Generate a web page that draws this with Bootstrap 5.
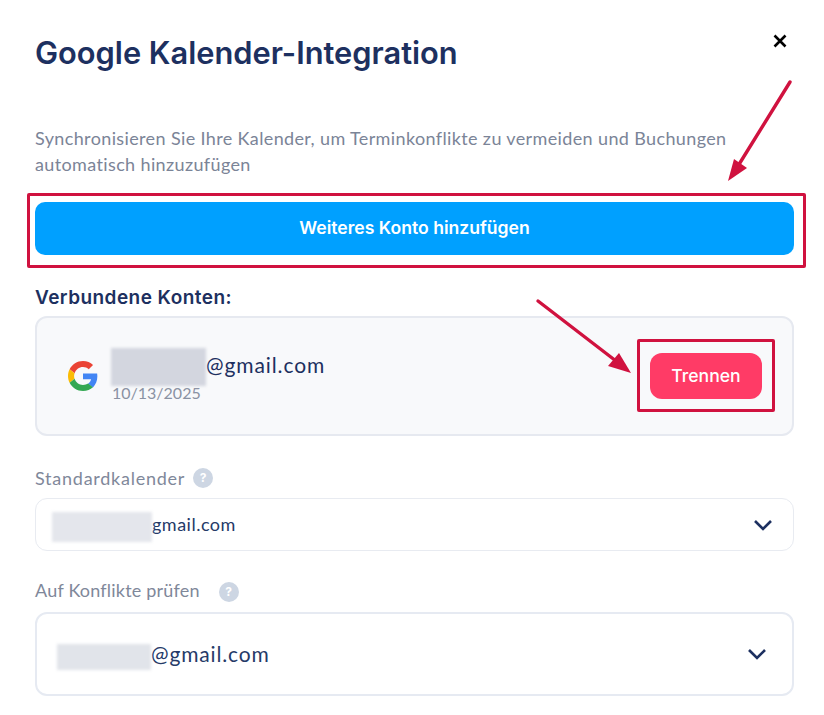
<!DOCTYPE html>
<html lang="de">
<head>
    <meta charset="UTF-8">
    <title>Google Kalender-Integration</title>
    <link href="https://cdn.jsdelivr.net/npm/bootstrap@5.3.0/dist/css/bootstrap.min.css" rel="stylesheet">
    <style>
        body { background: #fff; font-family: "Lato", "Liberation Sans", sans-serif; color: #1d2f5f; overflow: hidden; }
        .dlg { position: relative; width: 824px; height: 715px; padding: 30px 30px 0 35px; }
        .dlg-title { font-family: "Inter", sans-serif; font-weight: 600; font-size: 30.8px; line-height: 46px; color: #1d3060; margin: 0; }
        .dlg-close { border: 0; background: none; padding: 0; width: 16px; height: 16px; margin-top: 4px; margin-right: 5px; display: flex; }
        .dlg-desc { font-size: 18px; line-height: 26px; color: #7b8497; margin: 49px 0 0; width: 759px; letter-spacing: .37px; }
        .btn-addacct { display: block; width: 759px; height: 53px; margin-top: 25px; background: #00a0ff; border: 0; border-radius: 10px; color: #fff; font-family: "Inter", sans-serif; font-weight: 600; font-size: 17.6px; }
        .btn-addacct:hover { background: #00a0ff; color: #fff; }
        .sect-head { font-family: "Inter", sans-serif; font-weight: 600; font-size: 19px; line-height: 24px; letter-spacing: .45px; color: #1d3060; margin: 31px 0 6px; }
        .acct-box { width: 759px; height: 120px; background: #f8f9fb; border: 2px solid #e6e9f0; border-radius: 12px; padding: 0 30px 0 31px; }
        .acct-info { padding-top: 4px; }
        .acct-mail { font-size: 21px; line-height: 24px; color: #1d3060; letter-spacing: .9px; white-space: nowrap; }
        .acct-date { font-size: 16px; line-height: 20px; color: #8a92a3; margin-left: 1px; margin-top: 4px; }
        .acct-row { gap: 13px; }
        .smudge { display: inline-block; background: #d8dbe3; filter: blur(1.5px); vertical-align: middle; }
        .smudge-acct { width: 95px; height: 38px; margin: -7px 0; background: #d3d6df; }
        .smudge-std { width: 100px; height: 30px; background: #e4e6ec; }
        .smudge-chk { width: 94px; height: 26px; background: #e1e4ea; }
        .btn-cut { width: 112px; height: 46px; background: #ff3b66; border: 0; border-radius: 12px; color: #fff; font-family: "Inter", sans-serif; font-weight: 500; font-size: 17.6px; }
        .btn-cut:hover { background: #ff3b66; color: #fff; }
        .fld-label { font-size: 18px; line-height: 24px; color: #7f889a; }
        .fld-std { margin-top: 30px; letter-spacing: .75px; }
        .fld-chk { margin-top: 27px; letter-spacing: .2px; }
        .hint-dot { width: 20px; height: 20px; border-radius: 50%; background: #cdd6e3; color: #fff; font-size: 12px; font-weight: 700; font-family: "Inter", sans-serif; letter-spacing: 0; }
        .fld-chk .hint-dot { margin-left: 3px; margin-top: 3px; }
        .pick-std { width: 759px; height: 53px; border: 1px solid #e8ebf1; border-radius: 12px; margin-top: 8px; padding: 0 20px 0 16px; font-size: 18px; letter-spacing: .5px; color: #253a68; }
        .pick-std > div { padding-top: 4px; }
        .pick-chk { width: 759px; height: 84px; border: 2px solid #e6eaf2; border-radius: 12px; margin-top: 10px; padding: 0 25px 0 20px; font-size: 21px; letter-spacing: .85px; color: #253a68; }
        .mark-box { position: absolute; border: 3px solid #d0123f; border-radius: 2px; pointer-events: none; }
        .mark-add { left: 27px; top: 193px; width: 779px; height: 75px; }
        .mark-cut { left: 637px; top: 339px; width: 138px; height: 73px; }
        .mark-arrows { position: absolute; left: 0; top: 0; pointer-events: none; }
    </style>
</head>
<body>
<div class="dlg">
    <div class="d-flex justify-content-between align-items-start">
        <h1 class="dlg-title">Google Kalender-Integration</h1>
        <button type="button" class="dlg-close" aria-label="Schließen">
            <svg width="14" height="14" viewBox="0 0 14 14"><path d="M1.5 1.5 12.5 12.5M12.5 1.5 1.5 12.5" stroke="#000" stroke-width="2.6" fill="none"/></svg>
        </button>
    </div>

    <p class="dlg-desc">Synchronisieren Sie Ihre Kalender, um Terminkonflikte zu vermeiden und Buchungen automatisch hinzuzufügen</p>

    <button type="button" class="btn btn-addacct">Weiteres Konto hinzufügen</button>

    <div class="sect-head">Verbundene Konten:</div>
    <div class="acct-box d-flex align-items-center justify-content-between">
        <div class="acct-row d-flex align-items-center">
            <svg width="30" height="30" viewBox="0 0 48 48">
                <path fill="#EA4335" d="M24 9.5c3.54 0 6.71 1.22 9.21 3.6l6.85-6.85C35.9 2.38 30.47 0 24 0 14.62 0 6.51 5.38 2.56 13.22l7.98 6.19C12.43 13.72 17.74 9.5 24 9.5z"/>
                <path fill="#4285F4" d="M46.98 24.55c0-1.57-.15-3.09-.38-4.55H24v9.02h12.94c-.58 2.96-2.26 5.48-4.78 7.18l7.73 6c4.51-4.18 7.09-10.36 7.09-17.65z"/>
                <path fill="#FBBC05" d="M10.53 28.59c-.48-1.45-.76-2.99-.76-4.59s.27-3.14.76-4.59l-7.98-6.19C.92 16.46 0 20.12 0 24c0 3.88.92 7.54 2.56 10.78l7.97-6.19z"/>
                <path fill="#34A853" d="M24 48c6.48 0 11.93-2.13 15.89-5.81l-7.73-6c-2.15 1.45-4.92 2.3-8.16 2.3-6.26 0-11.57-4.22-13.47-9.91l-7.98 6.19C6.51 42.62 14.62 48 24 48z"/>
            </svg>
            <div class="acct-info d-flex flex-column">
                <div class="acct-mail"><span class="smudge smudge-acct"></span>@gmail.com</div>
                <div class="acct-date">10/13/2025</div>
            </div>
        </div>
        <button type="button" class="btn btn-cut">Trennen</button>
    </div>

    <div class="fld-label fld-std d-flex align-items-center gap-2">Standardkalender <span class="hint-dot d-flex align-items-center justify-content-center">?</span></div>
    <div class="pick-std d-flex align-items-center justify-content-between">
        <div><span class="smudge smudge-std"></span>gmail.com</div>
        <svg width="20" height="12" viewBox="0 0 20 12"><path d="M2 2 10 10 18 2" stroke="#1d3060" stroke-width="2.6" fill="none"/></svg>
    </div>

    <div class="fld-label fld-chk d-flex align-items-center gap-3">Auf Konflikte prüfen <span class="hint-dot d-flex align-items-center justify-content-center">?</span></div>
    <div class="pick-chk d-flex align-items-center justify-content-between">
        <div><span class="smudge smudge-chk"></span>@gmail.com</div>
        <svg width="20" height="12" viewBox="0 0 20 12"><path d="M2 2 10 10 18 2" stroke="#1d3060" stroke-width="2.6" fill="none"/></svg>
    </div>

    <div class="mark-box mark-add"></div>
    <div class="mark-box mark-cut"></div>
    <svg class="mark-arrows" width="824" height="715" viewBox="0 0 824 715">
        <path d="M790 82 738 166" stroke="#d0123f" stroke-width="3.4" stroke-linecap="round" fill="none"/>
        <path d="M728 181 734 159 747 168Z" fill="#d0123f"/>
        <path d="M538 301 616 361" stroke="#d0123f" stroke-width="3.4" stroke-linecap="round" fill="none"/>
        <path d="M631 373 608 366 619 353Z" fill="#d0123f"/>
    </svg>
</div>
<script src="https://cdn.jsdelivr.net/npm/bootstrap@5.3.0/dist/js/bootstrap.bundle.min.js"></script>
</body>
</html>
